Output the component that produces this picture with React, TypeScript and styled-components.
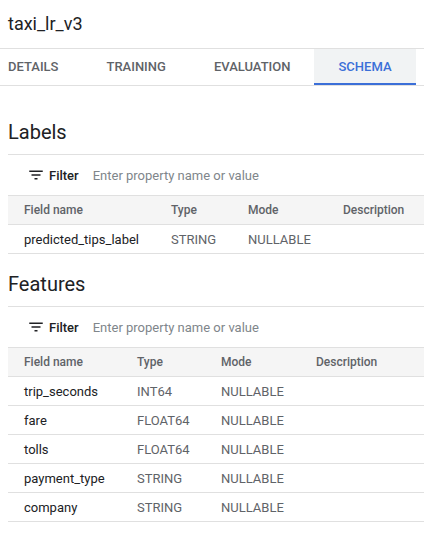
import React from 'react';
import styled, {createGlobalStyle} from 'styled-components';

const GlobalStyle = createGlobalStyle`
	html, body {
		margin: 0;
		padding: 0;
		background: #fff;
	}
	body {
		font-family: Roboto, "Liberation Sans", Arial, sans-serif;
		color: #202124;
		-webkit-font-smoothing: antialiased;
	}
`;

const Page = styled.div`
	width: 424px;
	overflow: hidden;
`;

const Title = styled.h1`
	margin: 0;
	padding: 12px 8px 0 8px;
	height: 36px;
	font-size: 18px;
	font-weight: 400;
	line-height: 24px;
	color: #202124;
`;

const TabBar = styled.div`
	display: flex;
	height: 36px;
	border-top: 1px solid #e0e0e0;
	border-bottom: 1px solid #e0e0e0;
`;

const Tab = styled.div<{$active?: boolean}>`
	display: flex;
	align-items: center;
	justify-content: center;
	padding: 0 24px;
	box-sizing: border-box;
	font-size: 13px;
	font-weight: 500;
	text-transform: uppercase;
	color: ${p => (p.$active ? '#3b6fd8' : '#5f6368')};
	background: ${p => (p.$active ? '#f1f3f4' : 'transparent')};
	border-bottom: 2px solid ${p => (p.$active ? '#3b6fd8' : 'transparent')};
	&:first-child {
		padding-left: 8px;
	}
`;

const Section = styled.section<{$first?: boolean}>`
	padding-left: 8px;
	padding-top: ${p => (p.$first ? '32px' : '16px')};
`;

const Heading = styled.h2`
	margin: 0;
	font-size: 20px;
	font-weight: 400;
	line-height: 28px;
	padding-bottom: 8px;
	border-bottom: 1px solid #e0e0e0;
	color: #202124;
`;

const FilterRow = styled.div`
	display: flex;
	align-items: center;
	height: 40px;
	padding-left: 19px;
	font-size: 13px;
`;

const FilterLabel = styled.span`
	display: flex;
	align-items: center;
	gap: 4px;
	font-weight: 500;
	color: #202124;
	margin-right: 14px;
`;

const Placeholder = styled.span`
	color: #80868b;
`;

const Table = styled.div<{$cols: string}>`
	display: grid;
	grid-template-columns: ${p => p.$cols};
	font-size: 13px;
	border-top: 1px solid #e0e0e0;
`;

const HeadCell = styled.div`
	height: 28px;
	display: flex;
	align-items: center;
	padding-left: 16px;
	background: #f5f5f5;
	border-bottom: 1px solid #e0e0e0;
	font-size: 12px;
	font-weight: 500;
	color: #5f6368;
	white-space: nowrap;
`;

const Cell = styled.div<{$muted?: boolean}>`
	height: 28px;
	display: flex;
	align-items: center;
	padding-left: 16px;
	border-bottom: 1px solid #e0e0e0;
	color: ${p => (p.$muted ? '#5f6368' : '#202124')};
	white-space: nowrap;
`;

const FilterIcon = () => (
	<svg width="18" height="18" viewBox="0 0 24 24" fill="#202124">
		<path d="M10 18h4v-2h-4v2zM3 6v2h18V6H3zm3 7h12v-2H6v2z" />
	</svg>
);

type Field = {name: string; type: string; mode: string};

const labels: Field[] = [{name: 'predicted_tips_label', type: 'STRING', mode: 'NULLABLE'}];

const features: Field[] = [
	{name: 'trip_seconds', type: 'INT64', mode: 'NULLABLE'},
	{name: 'fare', type: 'FLOAT64', mode: 'NULLABLE'},
	{name: 'tolls', type: 'FLOAT64', mode: 'NULLABLE'},
	{name: 'payment_type', type: 'STRING', mode: 'NULLABLE'},
	{name: 'company', type: 'STRING', mode: 'NULLABLE'},
];

const SchemaSection = ({title, rows, cols, first}: {title: string; rows: Field[]; cols: string; first?: boolean}) => (
	<Section $first={first}>
		<Heading>{title}</Heading>
		<FilterRow>
			<FilterLabel>
				<FilterIcon />
				Filter
			</FilterLabel>
			<Placeholder>Enter property name or value</Placeholder>
		</FilterRow>
		<Table $cols={cols}>
			<HeadCell>Field name</HeadCell>
			<HeadCell>Type</HeadCell>
			<HeadCell>Mode</HeadCell>
			<HeadCell>Description</HeadCell>
			{rows.map(r => (
				<React.Fragment key={r.name}>
					<Cell>{r.name}</Cell>
					<Cell $muted>{r.type}</Cell>
					<Cell $muted>{r.mode}</Cell>
					<Cell />
				</React.Fragment>
			))}
		</Table>
	</Section>
);

export default function App() {
	return (
		<Page>
			<GlobalStyle />
			<Title>taxi_lr_v3</Title>
			<TabBar>
				<Tab>Details</Tab>
				<Tab>Training</Tab>
				<Tab>Evaluation</Tab>
				<Tab $active>Schema</Tab>
			</TabBar>
			<SchemaSection title="Labels" rows={labels} cols="147px 77px 95px 1fr" first />
			<SchemaSection title="Features" rows={features} cols="113px 84px 95px 1fr" />
		</Page>
	);
}
